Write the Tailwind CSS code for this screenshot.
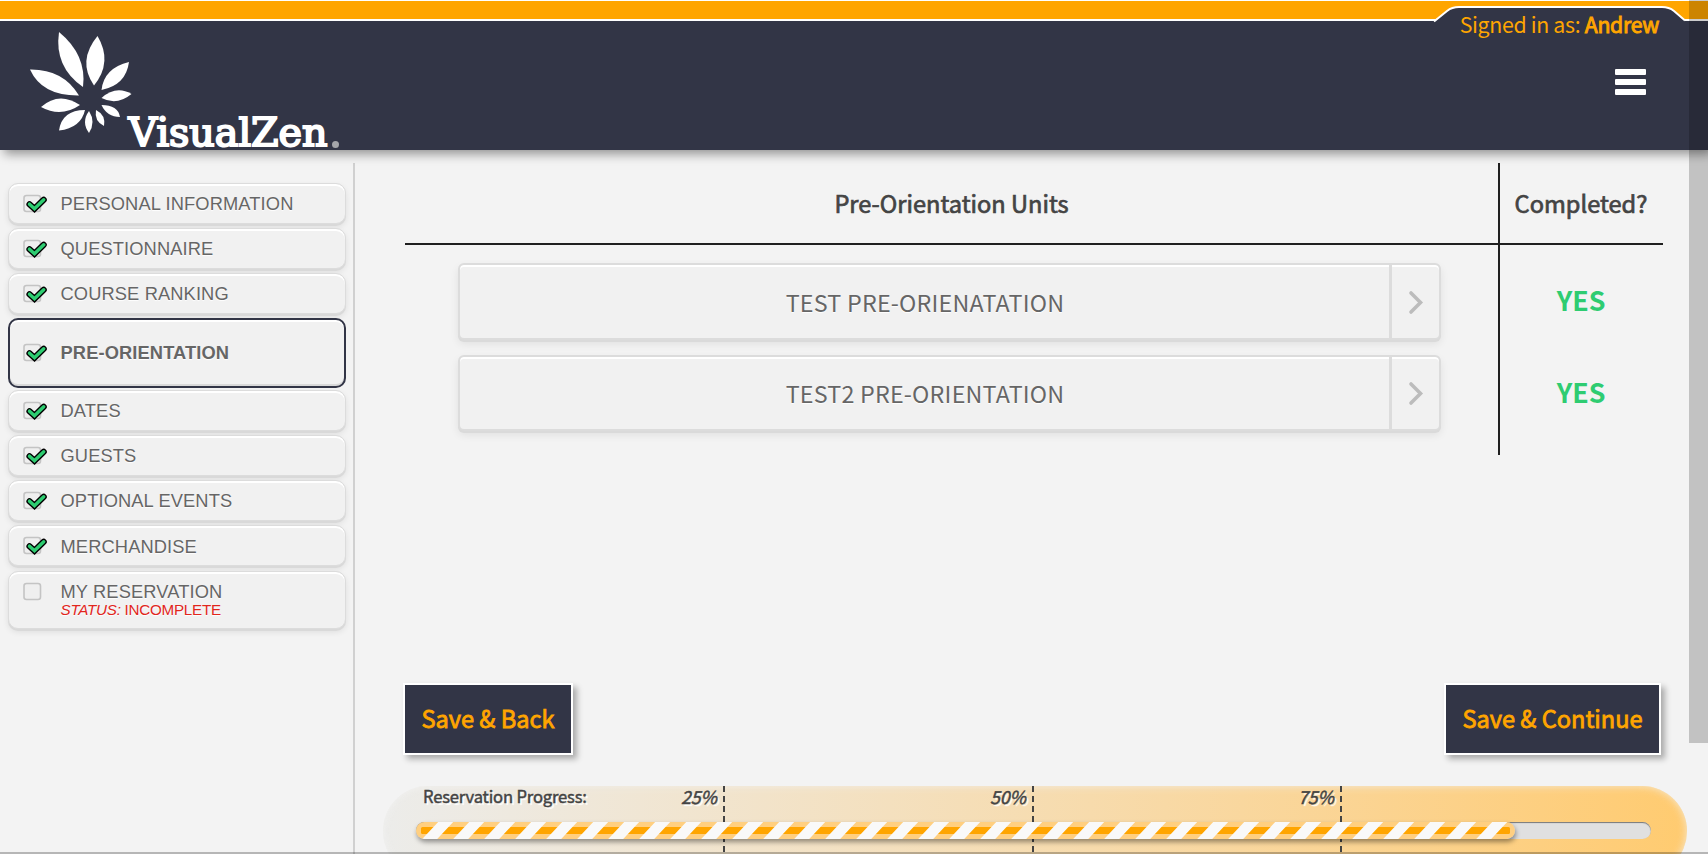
<!DOCTYPE html>
<html lang="en">
<head>
<meta charset="utf-8">
<title>Pre-Orientation</title>
<script src="https://cdn.jsdelivr.net/npm/@tailwindcss/browser@4"></script>
</head>
<body class="bg-[#f3f3f3]">
<svg width="0" height="0" class="absolute">
  <symbol id="box" viewBox="0 0 26 20"><rect x="1" y="1.5" width="16.5" height="16" rx="2.5" fill="#efefef" stroke="#c4c4c4" stroke-width="1.6"/></symbol>
  <symbol id="check" viewBox="0 0 26 20"><rect x="1" y="1.5" width="16.5" height="16" rx="2.5" fill="#efefef" stroke="#c4c4c4" stroke-width="1.6"/><path d="M6.5 10.2 11.5 14.7 20.700 5.8" fill="none" stroke="#000" stroke-width="6.2" stroke-linecap="round" stroke-linejoin="miter"/><path d="M6.5 10.2 11.5 14.7 20.700 5.8" fill="none" stroke="#2ecc71" stroke-width="3.5" stroke-linecap="round" stroke-linejoin="miter"/></symbol>
</svg>
<div class="relative h-[854px] w-[1708px] overflow-hidden bg-[#f3f3f3] font-['Noto_Sans_CJK_SC',sans-serif] text-[#444]">
  <header class="relative z-10 h-[150px] border-t border-white bg-[#323546] shadow-[4px_4px_10px_rgba(0,0,0,0.4)]">
    <div class="h-5 border-b-2 border-white bg-[#ffa500]"></div>
    <svg class="absolute left-[1430px] top-0 h-[24px] w-[260px]" viewBox="0 1 260 24"><path d="M4 21.5 17 11Q22 7 29 7H232Q239 7 244 11L255 20.5V25H4Z" fill="#323546"/><path d="M4 21.5 17 11Q22 7 29 7H232Q239 7 244 11L255 20.5" fill="none" stroke="#fff" stroke-width="2"/></svg>
    <div class="absolute right-[49px] top-[6px] whitespace-nowrap text-[21.3px] leading-[34px] tracking-[-0.32px] text-[#ffa500]">Signed in as: <span class="[-webkit-text-stroke:0.9px_#ffa500]">Andrew</span></div>
    <svg class="absolute left-[1614px] top-[67px]" width="34" height="30" fill="#fff"><rect x="1" y="1" width="31" height="6" rx="1"/><rect x="1" y="11" width="31" height="6" rx="1"/><rect x="1" y="21" width="31" height="6" rx="1"/></svg>
    <svg class="absolute left-0 top-0 overflow-visible" width="360" height="149" viewBox="0 1 360 149" fill="#fff">
      <path d="M59 32Q54 67 83 87Q87 55 59 32Z"/><path d="M97.500 36Q77 61 94 85.500Q113 62 97.500 36Z"/>
      <path d="M30 69.500Q42 96 79 95.500Q63 69 30 69.500Z"/><path d="M129 62Q104 68 101.500 90Q126 85 129 62Z"/>
      <path d="M131.500 94Q116 85 101.500 98Q117 106 131.500 94Z"/><path d="M41 107Q59 91 80 105Q61 118 41 107Z"/>
      <path d="M59 130.500Q62 110 85 110Q81 128 59 130.500Z"/><path d="M120 117Q118 105 101.500 105Q107 117 120 117Z"/>
      <path d="M89 111Q81 122 89 133Q96 122 89 111Z"/><path d="M96 110Q94 121 104 126Q106 115 96 110Z"/>
      <text x="128.500" y="146.200" textLength="199" lengthAdjust="spacingAndGlyphs" font-family="DejaVu Serif" font-size="38.500" stroke="#fff" stroke-width="2">VisualZen</text>
      <circle cx="335.500" cy="144.500" r="3.500" fill="#a5a6aa"/>
    </svg>
  </header>
  <div class="flex h-[704px]">
    <aside class="mt-[13px] w-[355px] shrink-0 border-r-2 border-[#d0d0d0] pl-[7.5px] pt-[19.6px] font-['Liberation_Sans',sans-serif] text-[18.3px] tracking-[0.12px] text-[#666]">
      <nav class="flex w-[338px] flex-col gap-[4.17px] [text-shadow:0_1px_1px_#fff]">
        <a class="flex h-[41px] items-center rounded-[10px] border-[1.5px] border-[#dcdcdc] bg-[#f1f1f1] pl-[14px] pt-px shadow-[0_2px_0_#d9d9d9,0_3px_6px_rgba(0,0,0,0.09),inset_0_2px_0_#fff]"><svg class="mr-[12px] h-5 w-[26px]"><use href="#check"/></svg>PERSONAL INFORMATION</a>
        <a class="flex h-[41px] items-center rounded-[10px] border-[1.5px] border-[#dcdcdc] bg-[#f1f1f1] pl-[14px] pt-px shadow-[0_2px_0_#d9d9d9,0_3px_6px_rgba(0,0,0,0.09),inset_0_2px_0_#fff]"><svg class="mr-[12px] h-5 w-[26px]"><use href="#check"/></svg>QUESTIONNAIRE</a>
        <a class="flex h-[41px] items-center rounded-[10px] border-[1.5px] border-[#dcdcdc] bg-[#f1f1f1] pl-[14px] pt-px shadow-[0_2px_0_#d9d9d9,0_3px_6px_rgba(0,0,0,0.09),inset_0_2px_0_#fff]"><svg class="mr-[12px] h-5 w-[26px]"><use href="#check"/></svg>COURSE RANKING</a>
        <a class="flex h-[70px] items-center rounded-[10px] border-2 border-[#323546] bg-[#f1f1f1] pl-[13px] font-bold shadow-[inset_0_-2px_0_#d9d9d9,inset_0_2px_0_#fff]"><svg class="mr-[12px] h-5 w-[26px]"><use href="#check"/></svg>PRE-ORIENTATION</a>
        <a class="-mt-[2.4px] flex h-[41px] items-center rounded-[10px] border-[1.5px] border-[#dcdcdc] bg-[#f1f1f1] pl-[14px] pt-px shadow-[0_2px_0_#d9d9d9,0_3px_6px_rgba(0,0,0,0.09),inset_0_2px_0_#fff]"><svg class="mr-[12px] h-5 w-[26px]"><use href="#check"/></svg>DATES</a>
        <a class="flex h-[41px] items-center rounded-[10px] border-[1.5px] border-[#dcdcdc] bg-[#f1f1f1] pl-[14px] pt-px shadow-[0_2px_0_#d9d9d9,0_3px_6px_rgba(0,0,0,0.09),inset_0_2px_0_#fff]"><svg class="mr-[12px] h-5 w-[26px]"><use href="#check"/></svg>GUESTS</a>
        <a class="flex h-[41px] items-center rounded-[10px] border-[1.5px] border-[#dcdcdc] bg-[#f1f1f1] pl-[14px] pt-px shadow-[0_2px_0_#d9d9d9,0_3px_6px_rgba(0,0,0,0.09),inset_0_2px_0_#fff]"><svg class="mr-[12px] h-5 w-[26px]"><use href="#check"/></svg>OPTIONAL EVENTS</a>
        <a class="flex h-[41px] items-center rounded-[10px] border-[1.5px] border-[#dcdcdc] bg-[#f1f1f1] pl-[14px] pt-px shadow-[0_2px_0_#d9d9d9,0_3px_6px_rgba(0,0,0,0.09),inset_0_2px_0_#fff]"><svg class="mr-[12px] h-5 w-[26px]"><use href="#check"/></svg>MERCHANDISE</a>
        <a class="mt-[0.5px] flex h-[58px] items-start rounded-[10px] border-[1.5px] border-[#dcdcdc] bg-[#f1f1f1] pl-[14px] pt-[10px] shadow-[0_2px_0_#d9d9d9,0_3px_6px_rgba(0,0,0,0.09),inset_0_2px_0_#fff]"><svg class="mr-[12px] h-5 w-[26px]"><use href="#box"/></svg><span class="block leading-[20px]">MY RESERVATION<span class="block text-[15.2px] leading-[16px] tracking-[-0.25px] text-[#e1261c]"><i>STATUS:</i> INCOMPLETE</span></span></a>
      </nav>
    </aside>
    <main class="flex min-w-0 flex-1 flex-col pl-[50px] pt-[13px]">
      <section class="grid h-[292px] w-[1258px] shrink-0 grid-cols-[1095px_163px] grid-rows-[82px_1fr]">
        <h2 class="flex items-center justify-center border-b-2 border-r-2 border-[#1f1f1f] pb-[26px] text-[23.6px] [-webkit-text-stroke:0.7px_#444]"><span class="translate-y-[14px]">Pre-Orientation Units</span></h2>
        <h2 class="flex items-center justify-center border-b-2 border-[#1f1f1f] pb-[26px] pr-px text-[23.6px] [-webkit-text-stroke:0.7px_#444]"><span class="translate-y-[14px]">Completed?</span></h2>
        <div class="flex flex-col gap-[15px] border-r-2 border-[#1f1f1f] pl-[53px] pt-[18px] text-[23.3px] tracking-[0.2px] text-[#666] [text-shadow:0_1px_1px_#fff]">
          <a class="flex h-[77px] w-[983px] rounded-[6px] border-2 border-[#dcdcdc] bg-[#f1f1f1] shadow-[0_2px_0_#dadada,0_4px_8px_rgba(0,0,0,0.08),inset_0_2px_0_#fff]"><span class="flex flex-1 items-center justify-center pl-px pt-[2px]">TEST PRE-ORIENATATION</span><span class="flex w-[50px] items-center justify-center border-l-[3px] border-[#dcdcdc]"><svg width="16" height="26" fill="none" stroke="#bcbcbc" stroke-width="3.600" stroke-linecap="round"><path d="M3 4 12.500 13.500 3 23"/></svg></span></a>
          <a class="flex h-[76px] w-[983px] rounded-[6px] border-2 border-[#dcdcdc] bg-[#f1f1f1] shadow-[0_2px_0_#dadada,0_4px_8px_rgba(0,0,0,0.08),inset_0_2px_0_#fff]"><span class="flex flex-1 items-center justify-center pl-px pt-px">TEST2 PRE-ORIENTATION</span><span class="flex w-[50px] items-center justify-center border-l-[3px] border-[#dcdcdc]"><svg width="16" height="26" fill="none" stroke="#bcbcbc" stroke-width="3.600" stroke-linecap="round"><path d="M3 4 12.500 13.500 3 23"/></svg></span></a>
        </div>
        <div class="flex flex-col gap-[52px] pr-px pt-[35px] text-center text-[26.8px] font-bold leading-[40px] text-[#2ecc71]"><span>YES</span><span>YES</span></div>
      </section>
      <div class="mt-[228px] flex h-[72px] w-[1258px] shrink-0 justify-between text-[23.6px] text-[#ffa500] [-webkit-text-stroke:0.8px_#ffa500]">
        <button class="-ml-[2px] w-[170px] whitespace-nowrap border-2 border-white bg-[#323546] shadow-[4px_4px_6px_rgba(0,0,0,0.3)]">Save &amp; Back</button>
        <button class="mr-[2px] w-[217px] whitespace-nowrap border-2 border-white bg-[#323546] shadow-[4px_4px_6px_rgba(0,0,0,0.3)]">Save &amp; Continue</button>
      </div>
      <div class="relative -ml-[22px] mt-[31px] h-[90px] w-[1304px] shrink-0 rounded-[45px] bg-linear-to-r from-[#ececea] to-[#ffcb70] shadow-[inset_0_0_8px_rgba(242,242,242,0.8)] [text-shadow:2px_2px_1px_#fff]">
        <div class="grid h-9 grid-cols-[341px_309px_308px] text-[17.8px] leading-[20px]">
          <div class="flex justify-between pl-[40px] pr-[7px] [-webkit-text-stroke:0.45px_#444]"><span class="text-[16.6px] leading-[21px] tracking-[-0.17px]">Reservation Progress:</span><i>25%</i></div>
          <i class="pr-[7px] text-right [-webkit-text-stroke:0.45px_#444]">50%</i>
          <i class="pr-[7px] text-right [-webkit-text-stroke:0.45px_#444]">75%</i>
        </div>
        <svg class="absolute left-0 top-0" width="1304" height="90" stroke="#444" stroke-width="2" stroke-dasharray="6 4"><path d="M341 0V90M650 0V90M958 0V90"/></svg>
        <div class="relative ml-[33px] h-[17px] w-[1235px] rounded-full bg-[#e0e0e0] shadow-[inset_0_1px_1px_#777]">
          <svg class="rounded-full shadow-[1px_3px_5px_rgba(0,0,0,0.4)]" width="1099" height="17"><rect width="1099" height="17" fill="#ffcf80"/><rect x="5" y="5" width="1089" height="7" rx="1.500" fill="#ffa500"/><path id="bars" fill="#f9f9f9"/></svg>
        </div>
      </div>
    </main>
  </div>
  <div class="absolute bottom-0 left-0 z-20 h-[2px] w-full bg-black/25"></div>
  <div class="absolute right-0 top-0 z-20 h-[743px] w-[19px] bg-black/20"></div>
</div>
<script>
  let d = '';
  for (let x = 6.2; x < 1090; x += 31) d += `M${x} 17H${x + 15}L${x + 31} 0H${x + 16}Z`;
  document.getElementById('bars').setAttribute('d', d);
</script>
</body>
</html>
